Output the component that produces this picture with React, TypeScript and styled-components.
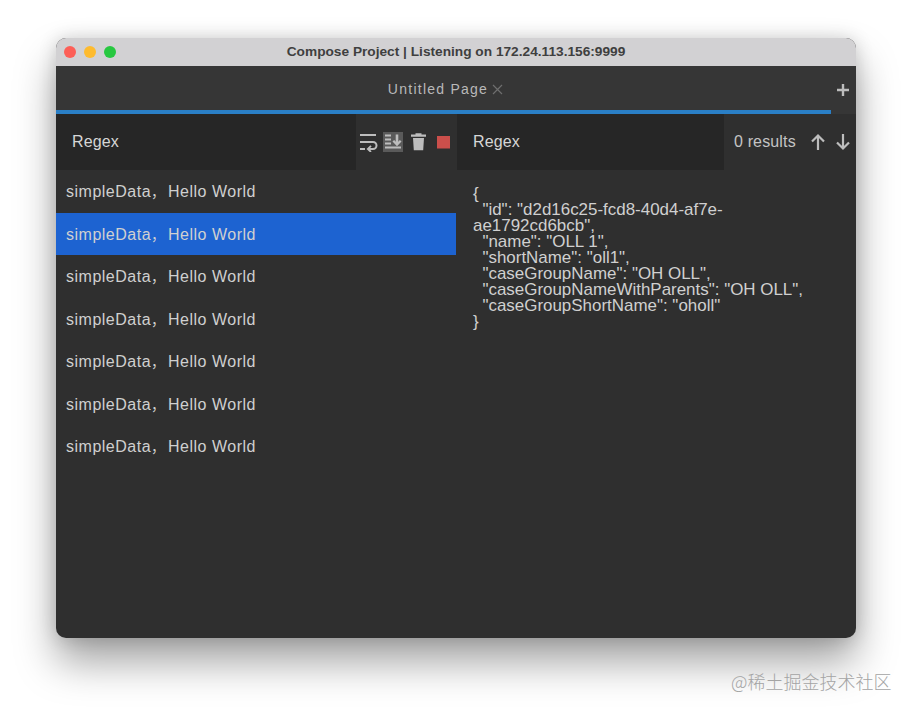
import React from "react";
import styled, { createGlobalStyle } from "styled-components";

const Global = createGlobalStyle`
  html, body { margin: 0; padding: 0; background: #fff; }
  body { font-family: "Liberation Sans", "Noto Sans CJK SC", sans-serif; }
`;
const Page = styled.div`
  position: relative;
  width: 912px;
  height: 712px;
  padding: 38px 56px 0;
  box-sizing: border-box;
  overflow: hidden;
  background: #fff;
`;
const Window = styled.div`
  width: 800px;
  height: 600px;
  border-radius: 10px;
  overflow: hidden;
  display: flex;
  flex-direction: column;
  background: #2f2f2f;
  box-shadow: 0 24px 40px rgba(0, 0, 0, 0.36), 0 0 18px rgba(0, 0, 0, 0.16);
`;
const TitleBar = styled.div`
  position: relative;
  height: 28px;
  flex: none;
  display: flex;
  align-items: center;
  justify-content: center;
  padding-bottom: 2px;
  box-sizing: border-box;
  background: #d2d1d3;
  color: #3f3f3f;
  font-size: 13.7px;
  font-weight: 700;
`;
const Lights = styled.div`
  position: absolute;
  left: 8px;
  top: 8px;
  display: flex;
  gap: 8px;
`;
const Light = styled.span<{ $c: string }>`
  width: 12px;
  height: 12px;
  border-radius: 50%;
  background: ${(p) => p.$c};
`;
const TabBar = styled.div`
  position: relative;
  height: 44px;
  flex: none;
  display: flex;
  align-items: center;
  justify-content: center;
  gap: 4px;
  padding: 2px 21px 0 0;
  box-sizing: border-box;
  background: #363636;
  color: #b9b9b9;
  font-size: 14px;
  letter-spacing: 1.25px;
`;
const AddTab = styled.span`
  position: absolute;
  right: 6px;
  top: 17px;
  display: flex;
`;
const Progress = styled.div`
  height: 4px;
  flex: none;
  background: #363636;
`;
const ProgressFill = styled.div`
  width: 775px;
  height: 100%;
  background: #2a7fc6;
`;
const Panes = styled.div`
  flex: 1;
  display: flex;
  min-height: 0;
`;
const LeftPane = styled.div`
  width: 400px;
  flex: none;
  margin-right: 1px;
  display: flex;
  flex-direction: column;
`;
const RightPane = styled.div`
  flex: 1;
  display: flex;
  flex-direction: column;
  min-width: 0;
`;
const Toolbar = styled.div`
  height: 56px;
  flex: none;
  display: flex;
  align-items: center;
  background: #2f2f2f;
`;
const Search = styled.div<{ $w: number }>`
  width: ${(p) => p.$w}px;
  height: 100%;
  flex: none;
  display: flex;
  align-items: center;
  box-sizing: border-box;
  padding: 0 0 0 16px;
  background: #262626;
  color: #d6d6d6;
  font-size: 16px;
  letter-spacing: 0.15px;
`;
const Tools = styled.div`
  flex: 1;
  display: flex;
  align-items: center;
  padding-left: 2px;
  gap: 5px;
`;
const ToolButton = styled.span<{ $active?: boolean }>`
  width: 20px;
  height: 20px;
  display: flex;
  align-items: center;
  justify-content: center;
  background: ${(p) => (p.$active ? "#5a5a5a" : "transparent")};
`;
const Results = styled.div`
  flex: 1;
  display: flex;
  align-items: center;
  padding-left: 10px;
  color: #c4c4c4;
  font-size: 16px;
  letter-spacing: 0.15px;
`;
const Arrows = styled.span`
  display: flex;
  gap: 9px;
  margin-left: 14px;
`;
const List = styled.div`
  display: flex;
  flex-direction: column;
`;
const Row = styled.div<{ $selected?: boolean }>`
  height: 42.5px;
  display: flex;
  align-items: center;
  padding: 0 0 0.4px 10px;
  box-sizing: border-box;
  color: #d0d0d0;
  background: ${(p) => (p.$selected ? "#1d63d1" : "transparent")};
  font-size: 16px;
  letter-spacing: 0.5px;
  white-space: pre;
`;
const Comma = styled.span`
  font-size: 14px;
  margin-right: 2.5px;
`;
const Detail = styled.pre`
  margin: 0;
  padding: 16px 16px 0;
  color: #d0d0d0;
  font-family: "Liberation Sans", sans-serif;
  font-size: 16.95px;
  line-height: 16px;
  white-space: pre-wrap;
  width: 350px;
`;
const Watermark = styled.div`
  position: absolute;
  left: 731px;
  top: 671px;
  color: #a4a4a4;
  font-size: 18px;
  line-height: 20px;
  white-space: nowrap;
  font-family: "Noto Sans CJK SC", sans-serif;
  font-weight: 300;
`;

const G = "#bdbdbd";
const CloseIcon = () => (
  <svg width="11" height="11" viewBox="0 0 11 11" fill="none" stroke="#6e6e6e" strokeWidth="1.2">
    <path d="M1 1l9 9M10 1l-9 9" />
  </svg>
);
const PlusIcon = () => (
  <svg width="14" height="14" viewBox="0 0 14 14" fill="none" stroke={G} strokeWidth="2.4">
    <path d="M7 1v12M1 7h12" />
  </svg>
);
const WrapIcon = () => (
  <svg width="20" height="20" viewBox="0 0 20 20" fill="none" stroke={G} strokeWidth="2">
    <path d="M2 3h16M2 10h13a3.5 3.5 0 0 1 0 7h-4" />
    <path d="M2 17h5" />
    <path d="M13 13.8l-3.2 3.2 3.2 3" strokeWidth="1.8" />
  </svg>
);
const ScrollIcon = () => (
  <svg width="20" height="20" viewBox="0 0 20 20" fill="none" stroke={G}>
    <path d="M2 3.5h6M2 7.5h6M2 11.5h6M2 15.5h16" strokeWidth="2" />
    <path d="M14 2.5v9" strokeWidth="2.6" />
    <path d="M10.3 8.8l3.7 3.8 3.7-3.8" strokeWidth="2.3" />
  </svg>
);
const TrashIcon = () => (
  <svg width="20" height="20" viewBox="0 0 20 20" fill={G}>
    <path d="M3 2.6h15v2.2H3zM7.5 1.2h6v1.6h-6zM5 6h11l-.8 12.2H5.8z" />
  </svg>
);
const StopIcon = () => (
  <svg width="20" height="20" viewBox="0 0 20 20">
    <rect x="4" y="4" width="13" height="12.5" fill="#cb4f4b" />
  </svg>
);
const UpIcon = () => (
  <svg width="16" height="18" viewBox="0 0 16 18" fill="none" stroke={G} strokeWidth="2.2">
    <path d="M8 17V2.5M2 8.5l6-6 6 6" />
  </svg>
);
const DownIcon = () => (
  <svg width="16" height="18" viewBox="0 0 16 18" fill="none" stroke={G} strokeWidth="2.2">
    <path d="M8 1v14.5M2 9.5l6 6 6-6" />
  </svg>
);

const json = `{
  "id": "d2d16c25-fcd8-40d4-af7e-ae1792cd6bcb",
  "name": "OLL 1",
  "shortName": "oll1",
  "caseGroupName": "OH OLL",
  "caseGroupNameWithParents": "OH OLL",
  "caseGroupShortName": "oholl"
}`;

export default function App() {
  return (
    <Page>
      <Global />
      <Window>
        <TitleBar>
          <Lights>
            <Light $c="#fd5f57" />
            <Light $c="#febb2e" />
            <Light $c="#27c840" />
          </Lights>
          Compose Project | Listening on 172.24.113.156:9999
        </TitleBar>
        <TabBar>
          Untitled Page
          <CloseIcon />
          <AddTab>
            <PlusIcon />
          </AddTab>
        </TabBar>
        <Progress>
          <ProgressFill />
        </Progress>
        <Panes>
          <LeftPane>
            <Toolbar>
              <Search $w={300}>Regex</Search>
              <Tools>
                <ToolButton><WrapIcon /></ToolButton>
                <ToolButton $active><ScrollIcon /></ToolButton>
                <ToolButton><TrashIcon /></ToolButton>
                <ToolButton><StopIcon /></ToolButton>
              </Tools>
            </Toolbar>
            <List>
              {[0, 1, 2, 3, 4, 5, 6].map((i) => (
                <Row key={i} $selected={i === 1}>
                  <span>simpleData<Comma>，</Comma>Hello World</span>
                </Row>
              ))}
            </List>
          </LeftPane>
          <RightPane>
            <Toolbar>
              <Search $w={267}>Regex</Search>
              <Results>
                0 results
                <Arrows>
                  <UpIcon />
                  <DownIcon />
                </Arrows>
              </Results>
            </Toolbar>
            <Detail>{json}</Detail>
          </RightPane>
        </Panes>
      </Window>
      <Watermark>@稀土掘金技术社区</Watermark>
    </Page>
  );
}
